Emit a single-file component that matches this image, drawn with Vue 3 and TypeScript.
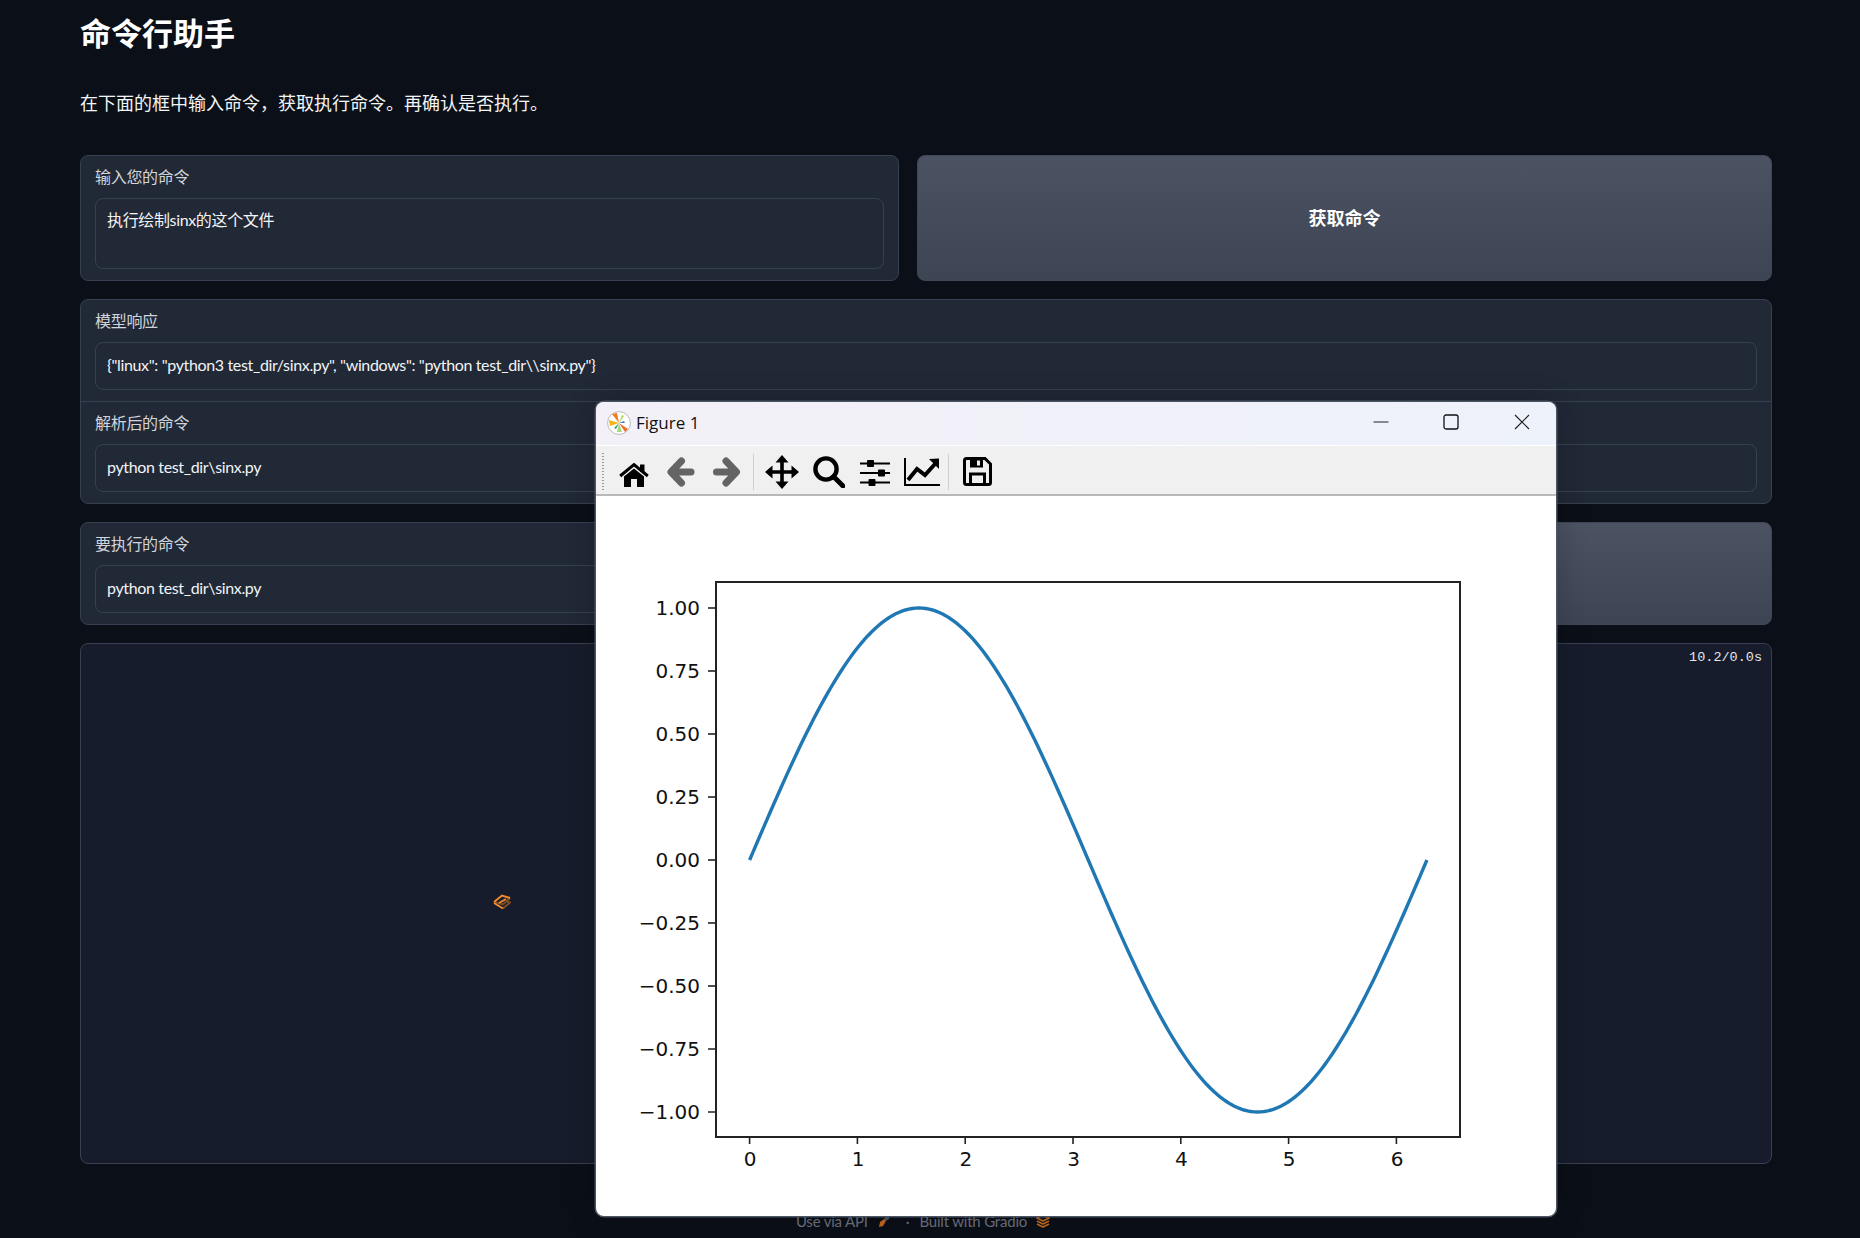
<script setup lang="ts">
// plot geometry, taken from the figure window (local to the body svg)
const originX = 153.6
const originY = 364
const unitX = 107.8
const unitY = 252

const xTicks = [0, 1, 2, 3, 4, 5, 6]
const yTicks = [1, 0.75, 0.5, 0.25, 0, -0.25, -0.5, -0.75, -1]

const toX = (t: number) => originX + t * unitX
const toY = (v: number) => originY - v * unitY

const yLabel = (v: number) => (v < 0 ? '\u2212' : '') + Math.abs(v).toFixed(2)

const sinePath = Array.from({ length: 201 }, (_, i) => {
  const t = (i / 200) * Math.PI * 2
  return `${i ? 'L' : 'M'}${toX(t).toFixed(2)} ${toY(Math.sin(t)).toFixed(2)}`
}).join(' ')
</script>

<template>
  <div class="page">
    <h1>命令行助手</h1>
    <p class="intro">在下面的框中输入命令，获取执行命令。再确认是否执行。</p>

    <div class="rows">
      <div class="split">
        <div class="card">
          <div class="block">
            <div class="label">输入您的命令</div>
            <div class="field tall">执行绘制sinx的这个文件</div>
          </div>
        </div>
        <button class="action">获取命令</button>
      </div>

      <div class="card">
        <div class="block">
          <div class="label">模型响应</div>
          <div class="field">{"linux": "python3 test_dir/sinx.py", "windows": "python test_dir\\sinx.py"}</div>
        </div>
        <div class="block divided">
          <div class="label">解析后的命令</div>
          <div class="field">python test_dir\sinx.py</div>
        </div>
      </div>

      <div class="split">
        <div class="card">
          <div class="block">
            <div class="label">要执行的命令</div>
            <div class="field">python test_dir\sinx.py</div>
          </div>
        </div>
        <button class="action"></button>
      </div>

      <div class="terminal">
        <span class="timer">10.2/0.0s</span>
        <svg class="spinner" viewBox="0 0 18 16" width="18" height="16">
          <path d="M17 4 L10 10.5 L1 8 M10 14.5 L17 8.5 L13 7" fill="none" stroke="#7a4c24" stroke-width="2" />
          <path d="M1 8 L9 1.5 L17 4 M1 9 L10 14.5 M6 9 L13 5" fill="none" stroke="#f08a2c" stroke-width="2" />
        </svg>
      </div>
    </div>

    <footer>
      <span>Use via API</span>
      <svg class="rocket" viewBox="0 0 12 12" width="12" height="12">
        <path d="M8 1 L11 1 L11 4 L8 6 L6 4 Z" fill="#4b5563" />
        <path d="M6 4 L8 6 L5 11 L1 12 L2 7 Z" fill="#c2681f" />
      </svg>
      <span class="dot">·</span>
      <span>Built with Gradio</span>
      <svg class="gradio" viewBox="0 0 14 14" width="14" height="14">
        <path d="M7 1 L13 4 L7 7 L1 4 Z M1 7 L7 10 L13 7 M1 10 L7 13 L13 10" fill="none" stroke="#c2681f" stroke-width="1.8" stroke-linejoin="round" />
      </svg>
    </footer>

    <!-- figure window floating over the page -->
    <div class="figure">
      <div class="titlebar">
        <svg class="logo" viewBox="0 0 24 24" width="24" height="24">
          <circle cx="12" cy="12" r="11.4" fill="#fff" stroke="#b9b9b9" />
          <path d="M12 12 L5 3 L10 2 Z" fill="#f47a20" />
          <path d="M12 12 L21 18 L18 21 Z" fill="#ef6c2c" />
          <path d="M12 12 L2 9 L3 15 Z" fill="#f5b316" />
          <path d="M12 12 L10 21 L15 21 Z" fill="#9fdc7c" />
          <path d="M12 12 L17 5 L15 4 Z" fill="#a8d848" />
          <path d="M12 12 L18 12 L17 10 Z" fill="#3a7fb8" />
          <path d="M12 12 L7 17 L9 18 Z" fill="#3f9a78" />
        </svg>
        <span class="fig-name">Figure 1</span>
        <div class="win-buttons">
          <svg viewBox="0 0 16 16" width="16" height="16"><path d="M0.5 8 H15.5" stroke="#222" stroke-width="1" /></svg>
          <svg viewBox="0 0 16 16" width="16" height="16"><rect x="1" y="1" width="14" height="14" rx="2" fill="none" stroke="#111" stroke-width="1.3" /></svg>
          <svg viewBox="0 0 16 16" width="16" height="16"><path d="M1 1 L15 15 M15 1 L1 15" stroke="#222" stroke-width="1.2" /></svg>
        </div>
      </div>

      <div class="toolbar">
        <span class="grip"></span>
        <svg class="t-home" viewBox="0 0 30 24" width="30" height="24">
          <path d="M1.2 13 L15 1.6 L28.8 13" fill="none" stroke="#000" stroke-width="3" />
          <path d="M21 1.5 H25.5 V9 H21 Z" fill="#000" />
          <path d="M5 13.5 L15 5.5 L25 13.5 V24 H18 V16 H12 V24 H5 Z" fill="#000" />
        </svg>
        <svg class="t-back" viewBox="0 0 28 30" width="28" height="30">
          <path d="M24 15 H6 M14.5 4 L4 15 L14.5 26" fill="none" stroke="#646464" stroke-width="7" stroke-linecap="round" stroke-linejoin="round" />
        </svg>
        <svg class="t-fwd" viewBox="0 0 28 30" width="29" height="30">
          <path d="M4 15 H22 M13.5 4 L24 15 L13.5 26" fill="none" stroke="#646464" stroke-width="7" stroke-linecap="round" stroke-linejoin="round" />
        </svg>
        <span class="sep s-one"></span>
        <svg class="t-move" viewBox="0 0 34 34" width="34" height="34">
          <path d="M17 4 V30 M4 17 H30" stroke="#000" stroke-width="3.6" />
          <path d="M17 0 L23.5 7.5 H10.5 Z M17 34 L23.5 26.5 H10.5 Z M0 17 L7.5 10.5 V23.5 Z M34 17 L26.5 10.5 V23.5 Z" fill="#000" />
        </svg>
        <svg class="t-zoom" viewBox="0 0 32 32" width="32" height="32">
          <circle cx="13" cy="13" r="10.6" fill="none" stroke="#000" stroke-width="4.4" />
          <path d="M20.5 20.5 L30 30" stroke="#000" stroke-width="4.8" stroke-linecap="round" />
        </svg>
        <svg class="t-sliders" viewBox="0 0 30 26" width="30" height="26">
          <path d="M0 3.5 H30 M0 13 H30 M0 22.5 H30" stroke="#000" stroke-width="2" />
          <rect x="7" y="0" width="7" height="7" rx="1" />
          <rect x="18" y="9.5" width="7" height="7" rx="1" />
          <rect x="8.5" y="19" width="7" height="7" rx="1" />
        </svg>
        <svg class="t-chart" viewBox="0 0 36 28" width="36" height="28">
          <path d="M1 0 V27 H36" fill="none" stroke="#000" stroke-width="2" />
          <path d="M4 22 L13 11 L21 17 L31 6" fill="none" stroke="#000" stroke-width="4" />
          <path d="M25 1 L35 0.5 L35 11 Z" fill="#000" />
        </svg>
        <span class="sep s-two"></span>
        <svg class="t-save" viewBox="0 0 29 29" width="29" height="29">
          <path d="M3.5 1.5 H22 L27.5 7 V25.5 Q27.5 27.5 25.5 27.5 H3.5 Q1.5 27.5 1.5 25.5 V3.5 Q1.5 1.5 3.5 1.5 Z" fill="none" stroke="#000" stroke-width="3" />
          <path d="M7 1.5 H20 V10.5 H7 Z" fill="#000" />
          <path d="M14 3.5 H17 V8.5 H14 Z" fill="#f0f0f0" />
          <path d="M6 15.5 H23 V27 H20 V18.5 H9 V27 H6 Z" fill="#000" />
        </svg>
      </div>

      <svg class="plot" viewBox="0 0 960 720" width="960" height="720">
        <g v-for="v in yTicks" :key="v">
          <line :x1="112" :x2="119" :y1="toY(v)" :y2="toY(v)" stroke="#222" stroke-width="1.6" />
          <text x="104" :y="toY(v)" text-anchor="end" dominant-baseline="central">{{ yLabel(v) }}</text>
        </g>
        <g v-for="t in xTicks" :key="t">
          <line :x1="toX(t)" :x2="toX(t)" y1="641" y2="648" stroke="#222" stroke-width="1.6" />
          <text :x="toX(t) + 0.6" y="663" text-anchor="middle" dominant-baseline="central">{{ t }}</text>
        </g>
        <rect x="120" y="86" width="744" height="555" fill="none" stroke="#222" stroke-width="2" />
        <path :d="sinePath" fill="none" stroke="#1f77b4" stroke-width="3.4" />
      </svg>
    </div>
  </div>
</template>

<style>
html,
body {
  margin: 0;
  background: #0b0f17;
}
</style>

<style scoped>
.page {
  position: relative;
  height: 1238px;
  box-sizing: border-box;
  padding: 0 88px 0 80px;
  overflow: hidden;
  background: #0b0f17;
  color: #f3f4f6;
  font-family: Lato, "Noto Sans CJK SC", sans-serif;
  font-size: 16px;
}
h1 {
  margin: 0;
  padding-top: 13px;
  font-size: 31px;
  line-height: 40px;
  font-weight: 700;
  color: #fff;
}
.intro {
  margin: 37px 0 0;
  font-size: 18px;
  line-height: 26px;
  color: #f3f4f6;
}
.rows {
  display: flex;
  flex-direction: column;
  gap: 18px;
  margin-top: 39px;
}
.split {
  display: grid;
  grid-template-columns: 819fr 855fr;
  column-gap: 18px;
}
.card {
  border: 1px solid #374050;
  border-radius: 8px;
  background: #212836;
}
.block {
  padding: 12px 14px 11px;
}
.divided {
  border-top: 1px solid #374050;
}
.label {
  height: 20px;
  margin-bottom: 10px;
  line-height: 18px;
  letter-spacing: -0.3px;
  color: #d1d5db;
}
.field {
  box-sizing: border-box;
  height: 48px;
  padding: 10px 11px;
  border: 1px solid #374050;
  border-radius: 8px;
  background: #212836;
  line-height: 24px;
  letter-spacing: -0.35px;
  color: #f3f4f6;
}
.tall {
  height: 71px;
  padding-top: 9px;
}
.action {
  border: 1px solid #3f4656;
  border-radius: 8px;
  background: linear-gradient(to bottom, #4b5261, #3d4454);
  color: #fff;
  font: inherit;
  font-size: 18px;
  font-weight: 700;
  padding-bottom: 3px;
}
.terminal {
  position: relative;
  box-sizing: border-box;
  height: 521px;
  border: 1px solid #374050;
  border-radius: 8px;
  background: #161c2b;
}
.timer {
  position: absolute;
  top: 6px;
  right: 9px;
  font-family: "Liberation Mono", monospace;
  font-size: 13.5px;
  line-height: 16px;
  color: #e5e7eb;
}
.spinner {
  position: absolute;
  left: 412px;
  top: 250px;
}
footer {
  display: flex;
  align-items: center;
  justify-content: center;
  height: 20px;
  margin-top: 47px;
  padding-right: 6px;
  font-size: 15px;
  line-height: 20px;
  letter-spacing: -0.2px;
  color: #6b7280;
}
.rocket {
  margin-left: 10px;
}
.gradio {
  margin-left: 9px;
}
.dot {
  margin: 0 10px 0 16px;
}
.figure {
  position: absolute;
  left: 596px;
  top: 402px;
  width: 960px;
  height: 814px;
  overflow: hidden;
  border-radius: 8px;
  background: #fff;
  box-shadow: 0 0 0 1.5px #4b5563, 0 0 30px rgba(0, 0, 0, 0.22);
}
.titlebar {
  display: flex;
  align-items: center;
  height: 43px;
  padding-left: 11px;
  border-bottom: 1px solid #fff;
  background: linear-gradient(to right, #f3f0f7, #eef2fb);
}
.fig-name {
  margin-left: 5px;
  padding-bottom: 2px;
  font-family: "Open Sans", "Noto Sans", sans-serif;
  font-size: 17px;
  color: #111;
}
.logo {
  margin-top: -1px;
}
.win-buttons {
  display: flex;
  gap: 54px;
  margin-left: auto;
  margin-right: 26px;
  padding-bottom: 3px;
}
.win-buttons svg:nth-child(2) {
  margin-right: 1px;
}
.toolbar {
  display: flex;
  align-items: center;
  box-sizing: border-box;
  height: 50px;
  padding-left: 6px;
  padding-top: 3px;
  border-bottom: 2px solid #b9b9b9;
  background: #f0f0f0;
}
.grip {
  width: 2px;
  height: 38px;
  background: repeating-linear-gradient(to bottom, #9a9a9a 0 1px, transparent 1px 3px);
}
.sep {
  width: 1px;
  height: 36px;
  background: #cfcfcf;
}
.t-home {
  margin: 2px 0 -4px 15px;
}
.t-back {
  margin-left: 18px;
}
.t-fwd {
  margin-left: 17px;
}
.s-one {
  margin-left: 12px;
}
.t-move {
  margin-left: 11px;
}
.t-zoom {
  margin-left: 14px;
}
.t-sliders {
  margin: 2px 0 0 15px;
}
.t-chart {
  margin-left: 14px;
}
.s-two {
  margin-left: 8px;
}
.t-save {
  margin-left: 14px;
}
.plot {
  display: block;
}
.plot text {
  font-family: "DejaVu Sans", sans-serif;
  font-size: 20px;
  fill: #111;
}
</style>
